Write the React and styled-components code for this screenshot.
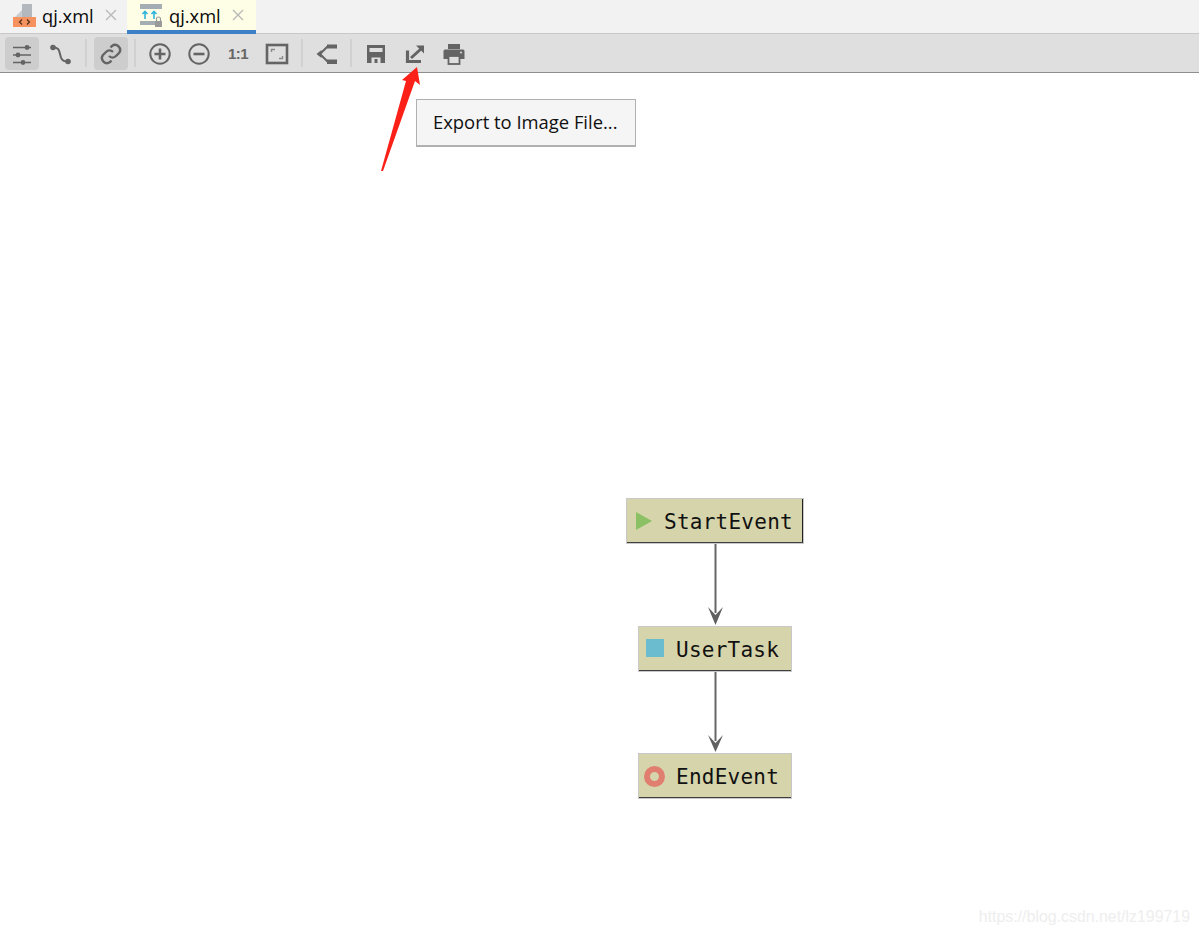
import React from "react";
import styled, { createGlobalStyle } from "styled-components";

const Global = createGlobalStyle`
  html, body { margin: 0; padding: 0; background: #fff; }
  #root { width: 1199px; height: 935px; overflow: hidden; }
`;

const Page = styled.div`
  position: relative;
  width: 1199px;
  height: 935px;
  display: flex;
  flex-direction: column;
  font-family: "Open Sans", "Noto Sans", sans-serif;
`;

const TabBar = styled.div`
  height: 33px;
  display: flex;
  background: #f2f2f2;
  border-bottom: 1px solid #c9c9c9;
`;

const Tab = styled.div`
  position: relative;
  width: ${(p) => (p.$active ? "129px" : "127px")};
  height: ${(p) => (p.$active ? "34px" : "33px")};
  box-sizing: border-box;
  padding: 0 0 ${(p) => (p.$active ? "0" : "3px")} 13px;
  display: flex;
  align-items: center;
  background: ${(p) => (p.$active ? "#fefee6" : "transparent")};
  border-bottom: ${(p) => (p.$active ? "4px solid #3d80c8" : "none")};
`;

const TabIcon = styled.svg`
  flex: none;
  width: 23px;
  height: 24px;
  margin-top: 2px;
`;

const TabName = styled.span`
  margin-left: 6px;
  font-size: 18.3px;
  color: #0a0a0a;
`;

const Close = styled.svg`
  margin-left: 11px;
  width: 12px;
  height: 12px;
  stroke: #b9b9b9;
  stroke-width: 1.4;
  fill: none;
`;

const Toolbar = styled.div`
  height: 39px;
  box-sizing: border-box;
  padding: 3px 0 0 5px;
  display: flex;
  align-items: flex-start;
  gap: 5px;
  background: #dfdfdf;
  border-bottom: 1px solid #8e8e8e;
`;

const ToolButton = styled.div`
  width: 34px;
  height: 33px;
  margin-right: ${(p) => p.$mr || 0}px;
  flex: none;
  display: flex;
  align-items: center;
  justify-content: center;
  border-radius: 4px;
  background: ${(p) => (p.$on ? "#cdcdcd" : "transparent")};
  color: #646464;
`;

const Separator = styled.div`
  flex: none;
  width: 2px;
  height: 28px;
  margin: 2px 2px 0 2px;
  background: #d1d1d1;
`;

const OneToOne = styled.span`
  font-size: 15px;
  font-weight: 700;
  letter-spacing: -0.6px;
  color: #666;
  font-family: "Liberation Sans", sans-serif;
`;

const Canvas = styled.div`
  position: relative;
  flex: 1;
  background: #fff;
`;

const Popup = styled.div`
  position: absolute;
  left: 416px;
  top: 26px;
  width: 220px;
  height: 48px;
  box-sizing: border-box;
  padding: 0 0 2px 16px;
  display: flex;
  align-items: center;
  background: #f5f5f5;
  border: 1px solid #b0b0b0;
  border-bottom-width: 2px;
  font-size: 18.4px;
  color: #101010;
`;

const Node = styled.div`
  position: absolute;
  left: ${(p) => p.$x}px;
  top: ${(p) => p.$y}px;
  width: ${(p) => p.$w}px;
  height: 46px;
  box-sizing: border-box;
  display: flex;
  align-items: center;
  padding: 0 0 0 ${(p) => p.$pad}px;
  background: #d6d4ab;
  border: 1px solid #c8c8c8;
  box-shadow: inset 0 -1px 0 #3f3f3f, inset ${(p) => (p.$dark ? "-1px" : "0")} 0 0 #222;
  font-family: "DejaVu Sans Mono", "Liberation Mono", monospace;
  font-size: 21px;
  letter-spacing: 0.25px;
  color: #111;
`;

const NodeIcon = styled.svg`
  flex: none;
  margin-bottom: ${(p) => p.$lift || 0}px;
`;

const NodeLabel = styled.span`
  margin: 2px 0 0 ${(p) => p.$gap}px;
`;

const Overlay = styled.svg`
  position: absolute;
  left: 0;
  top: 0;
  overflow: visible;
  pointer-events: none;
`;

const Watermark = styled.div`
  position: absolute;
  right: 9px;
  bottom: 9px;
  font-family: "Liberation Sans", sans-serif;
  font-size: 15.9px;
  color: #eeeeee;
`;

const Icon = ({ children }) => (
  <svg width="24" height="24" viewBox="0 0 24 24" fill="none" stroke="currentColor" strokeWidth="2">
    {children}
  </svg>
);

const FileIcon = () => (
  <TabIcon viewBox="0 0 23 24">
    <path d="M2 13 L9 6 V13 Z" fill="#c8ccd1" />
    <path d="M9 0 H19 V13 H9 Z" fill="#b3b8bf" />
    <rect x="0" y="13" width="23" height="10" fill="#f6925f" />
    <path d="M9 15.5 L6.5 18 L9 20.5 M14 15.5 L16.5 18 L14 20.5" stroke="#4f2c1c" strokeWidth="1.2" fill="none" />
  </TabIcon>
);

const DiagramFileIcon = () => (
  <TabIcon viewBox="0 0 23 24">
    <rect x="0" y="0" width="22" height="5" fill="#a4aeb2" />
    <rect x="0" y="17" width="16" height="4" fill="#a4aeb2" />
    <path d="M5 15 V8 M2.5 10 L5 7.5 L7.5 10 M14 15 V8 M11.5 10 L14 7.5 L16.5 10" stroke="#2fb4dc" strokeWidth="1.6" fill="none" />
    <rect x="15" y="17" width="7" height="6" fill="#9a9a9a" />
    <path d="M16.5 17 V15 A2 2 0 0 1 20.5 15 V17" stroke="#9a9a9a" strokeWidth="1.2" fill="none" />
  </TabIcon>
);

const CloseIcon = () => (
  <Close viewBox="0 0 12 12">
    <path d="M1 1 L11 11 M11 1 L1 11" />
  </Close>
);

export default function App() {
  return (
    <Page>
      <Global />
      <TabBar>
        <Tab>
          <FileIcon />
          <TabName>qj.xml</TabName>
          <CloseIcon />
        </Tab>
        <Tab $active>
          <DiagramFileIcon />
          <TabName>qj.xml</TabName>
          <CloseIcon />
        </Tab>
      </TabBar>
      <Toolbar>
        <ToolButton $on>
          <Icon>
            <path d="M3 5.5 H21 M3 13 H21 M3 20.5 H21" strokeWidth="1.6" />
            <circle cx="17" cy="5.5" r="2.4" fill="currentColor" stroke="none" />
            <circle cx="8" cy="13" r="2.4" fill="currentColor" stroke="none" />
            <circle cx="13" cy="20.5" r="2.4" fill="currentColor" stroke="none" />
          </Icon>
        </ToolButton>
        <ToolButton>
          <Icon>
            <path d="M4 5.5 C10 5.5 10 8 11 12 C12 17 13 19.5 19 19.5" strokeWidth="2" />
            <circle cx="4" cy="5.5" r="2.8" fill="currentColor" stroke="none" />
            <circle cx="19" cy="19.5" r="2.8" fill="currentColor" stroke="none" />
          </Icon>
        </ToolButton>
        <Separator />
        <ToolButton $on $mr={-1}>
          <Icon>
            <path d="M10 14 a5 5 0 0 0 7 0 l3 -3 a5 5 0 0 0 -7 -7 l-1.5 1.5" strokeWidth="2.4" />
            <path d="M14 10 a5 5 0 0 0 -7 0 l-3 3 a5 5 0 0 0 7 7 l1.5 -1.5" strokeWidth="2.4" />
          </Icon>
        </ToolButton>
        <Separator />
        <ToolButton>
          <Icon>
            <circle cx="12" cy="12" r="9.7" />
            <path d="M6.5 12 H17.5 M12 6.5 V17.5" strokeWidth="2.6" />
          </Icon>
        </ToolButton>
        <ToolButton>
          <Icon>
            <circle cx="12" cy="12" r="9.7" />
            <path d="M6.5 12 H17.5" strokeWidth="2.6" />
          </Icon>
        </ToolButton>
        <ToolButton>
          <OneToOne>1:1</OneToOne>
        </ToolButton>
        <ToolButton>
          <Icon>
            <rect x="2" y="3" width="20" height="18" strokeWidth="2.6" />
            <path d="M6.5 10 V7.5 H10 M17.5 14 V16.5 H14" strokeWidth="1.4" stroke="#8a8a8a" />
          </Icon>
        </ToolButton>
        <Separator />
        <ToolButton $mr={-1}>
          <Icon>
            <path d="M5 12 L12.5 4.5 M5 12 L12.5 19.5" strokeWidth="2" />
            <rect x="12" y="2.5" width="10" height="4" fill="currentColor" stroke="none" />
            <rect x="12" y="17.5" width="10" height="4.5" fill="currentColor" stroke="none" />
            <path d="M1.5 12 L6.5 8 V16 Z" fill="currentColor" stroke="none" />
          </Icon>
        </ToolButton>
        <Separator />
        <ToolButton>
          <Icon>
            <path d="M3 3 H21 V21 H3 Z" fill="currentColor" stroke="none" />
            <rect x="5.5" y="6" width="13" height="4" fill="#dfdfdf" stroke="none" />
            <rect x="7.5" y="15.5" width="9" height="5.5" fill="#dfdfdf" stroke="none" />
            <rect x="10.5" y="17" width="3" height="4" fill="currentColor" stroke="none" />
          </Icon>
        </ToolButton>
        <ToolButton>
          <Icon>
            <path d="M4.5 8.5 V19.5 H18" strokeWidth="3.2" />
            <path d="M8 16 L19 6" strokeWidth="3" />
            <path d="M13 3.5 H21 V11.5 Z" fill="currentColor" stroke="none" />
          </Icon>
        </ToolButton>
        <ToolButton>
          <Icon>
            <rect x="6" y="2" width="12" height="5" fill="currentColor" stroke="none" />
            <path d="M1.5 9 Q1.5 7.5 3 7.5 H21 Q22.5 7.5 22.5 9 V17 H1.5 Z" fill="currentColor" stroke="none" />
            <circle cx="19" cy="10.5" r="1" fill="#dfdfdf" stroke="none" />
            <rect x="6.5" y="14" width="11" height="8" fill="#dfdfdf" stroke="currentColor" strokeWidth="1.8" />
          </Icon>
        </ToolButton>
      </Toolbar>
      <Canvas>
        <Popup>Export to Image File...</Popup>
        <Node $x={626} $y={425} $w={178} $pad={9} $dark>
          <NodeIcon width="16" height="20" viewBox="0 0 16 20">
            <path d="M0 1 L16 10 L0 19 Z" fill="#8bc064" />
          </NodeIcon>
          <NodeLabel $gap={12}>StartEvent</NodeLabel>
        </Node>
        <Node $x={638} $y={553} $w={154} $pad={7}>
          <NodeIcon width="18" height="18" viewBox="0 0 18 18" $lift={2}>
            <rect width="18" height="18" fill="#6cbcd0" />
          </NodeIcon>
          <NodeLabel $gap={12}>UserTask</NodeLabel>
        </Node>
        <Node $x={638} $y={680} $w={154} $pad={5}>
          <NodeIcon width="21" height="21" viewBox="0 0 21 21">
            <circle cx="10.5" cy="10.5" r="7.5" fill="none" stroke="#e07f70" strokeWidth="6" />
          </NodeIcon>
          <NodeLabel $gap={11}>EndEvent</NodeLabel>
        </Node>
        <Overlay width="1199" height="862">
          <g stroke="#666" strokeWidth="2" fill="none">
            <path d="M715.5 471 V540" />
            <path d="M715.5 599 V668" />
          </g>
          <g fill="#606060">
            <path d="M708 534 L715.5 542 L723 534 L715.5 552 Z" />
            <path d="M708 662 L715.5 670 L723 662 L715.5 679 Z" />
          </g>
          <path d="M381 98 L406 8 L402 7 L417 -6 L420 12 L415 8 L383 98 Z" fill="#fb2118" />
        </Overlay>
        <Watermark>https://blog.csdn.net/lz199719</Watermark>
      </Canvas>
    </Page>
  );
}
